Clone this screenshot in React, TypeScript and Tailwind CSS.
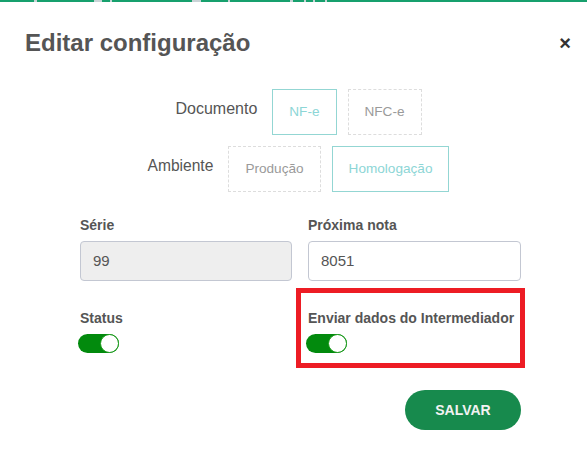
import React from "react";

const font = { fontFamily: '"Liberation Sans", Arial, sans-serif' };

function Toggle() {
  return (
    <div className="relative -ml-[2px] h-[19px] w-[41px] rounded-full bg-[#028a0d]">
      <div className="absolute right-0 top-0 h-[19px] w-[19px] rounded-full border border-[#1a9a1a] bg-white" />
    </div>
  );
}

function Choice({ label, active }: { label: string; active?: boolean }) {
  return (
    <div
      className={
        "flex h-[46px] items-center px-4 text-[13.6px] " +
        (active
          ? "border border-[#93d6d3] text-[#8dd6d6]"
          : "border border-dashed border-[#dddddd] text-[#9a9a9a]")
      }
    >
      {label}
    </div>
  );
}

export default function App() {
  return (
    <div className="relative h-[453px] w-full overflow-hidden bg-white text-[#555]" style={font}>
      <div className="flex h-[2px] w-full">
        <div className="w-[34px] bg-[#17a06d]" />
        <div className="w-[3px] bg-[#c9d3d6]" />
        <div className="w-[57px] bg-[#17a06d]" />
        <div className="w-[8px] bg-[#c9d3d6]" />
        <div className="w-[8px] bg-[#17a06d]" />
        <div className="w-[2px] bg-[#c9d3d6]" />
        <div className="w-[80px] bg-[#17a06d]" />
        <div className="w-[9px] bg-[#c9d3d6]" />
        <div className="w-[27px] bg-[#17a06d]" />
        <div className="w-[2px] bg-[#c9d3d6]" />
        <div className="w-[60px] bg-[#17a06d]" />
        <div className="w-[3px] bg-[#c9d3d6]" />
        <div className="w-[11px] bg-[#17a06d]" />
        <div className="w-[2px] bg-[#c9d3d6]" />
        <div className="w-[7px] bg-[#17a06d]" />
        <div className="w-[2px] bg-[#c9d3d6]" />
        <div className="w-[10px] bg-[#17a06d]" />
        <div className="w-[2px] bg-[#c9d3d6]" />
        <div className="flex-1 bg-[#17a06d]" />
      </div>

      <div className="flex items-center justify-between pl-[25px] pr-[16px] pt-[27px]">
        <h1 className="text-[24px] font-bold leading-[28px] text-[#555]">Editar configuração</h1>
        <span className="text-[20px] font-bold leading-[28px] text-[#333]">×</span>
      </div>

      <div className="pl-[80px] pr-[66px]">
        <div className="mt-[32px] flex flex-col items-center gap-[11px] pr-[4px]">
          <div className="flex items-start">
            <span className="mr-[15px] mt-[8px] text-[16px] leading-6 text-[#555]">Documento</span>
            <div className="flex gap-[11px]">
              <Choice label="NF-e" active />
              <Choice label="NFC-e" />
            </div>
          </div>
          <div className="flex items-start">
            <span className="mr-[15px] mt-[8px] text-[15.6px] leading-6 text-[#555]">Ambiente</span>
            <div className="flex gap-[11px]">
              <Choice label="Produção" />
              <Choice label="Homologação" active />
            </div>
          </div>
        </div>

        <div className="mt-[23px] grid grid-cols-[212px_213px] gap-x-[16px]">
          <div>
            <div className="text-[14px] font-bold leading-5 text-[#555]">Série</div>
            <div className="mt-[6px] flex h-[40px] items-center rounded-[4px] border border-[#c3c7d2] bg-[#eeeeee] px-[12px] text-[15px] text-[#555]">
              99
            </div>
          </div>
          <div>
            <div className="text-[14px] font-bold leading-5 text-[#555]">Próxima nota</div>
            <div className="mt-[6px] flex h-[40px] items-center rounded-[4px] border border-[#c3c7d2] bg-white px-[12px] text-[15px] text-[#555]">
              8051
            </div>
          </div>

          <div className="mt-[27px]">
            <div className="text-[14px] font-bold leading-5 text-[#555]">Status</div>
            <div className="mt-[6px]">
              <Toggle />
            </div>
          </div>
          <div className="relative mt-[27px]">
            <div className="text-[14px] font-bold leading-5 text-[#555]">Enviar dados do Intermediador</div>
            <div className="mt-[6px]">
              <Toggle />
            </div>
            <div className="pointer-events-none absolute -top-[20px] -left-[12px] h-[80px] w-[229px] border-[5px] border-[#ed1c24]" />
          </div>
        </div>

        <div className="mt-[37px] flex justify-end">
          <button className="h-[40px] w-[116px] rounded-full bg-[#178a4d] text-[14px] font-bold text-[#f2f2f2]">
            SALVAR
          </button>
        </div>
      </div>
    </div>
  );
}
